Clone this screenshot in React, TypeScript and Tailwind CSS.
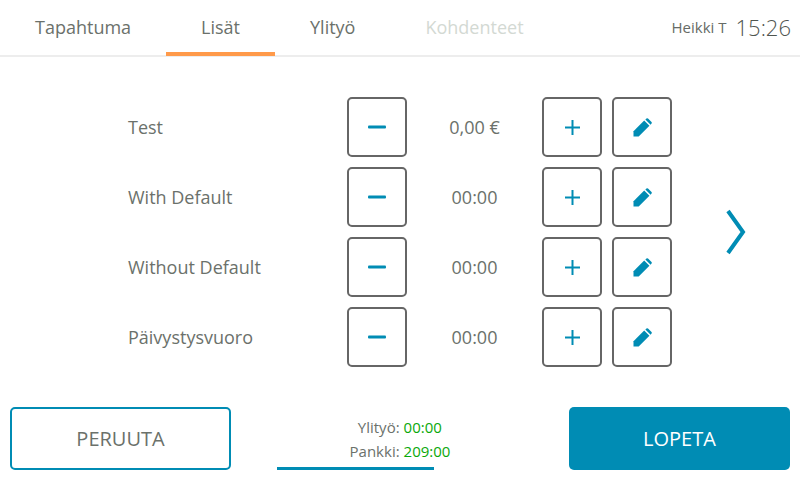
const rows = [
  { label: "Test", value: "0,00 €" },
  { label: "With Default", value: "00:00" },
  { label: "Without Default", value: "00:00" },
  { label: "Päivystysvuoro", value: "00:00" },
];

const tabs = [
  { label: "Tapahtuma", cls: "text-[#6b716b]" },
  { label: "Lisät", cls: "text-[#6b716b]" },
  { label: "Ylityö", cls: "text-[#6b716b]" },
  { label: "Kohdenteet", cls: "text-[#d3d9d3]" },
];

function SquareButton({ children }: { children: React.ReactNode }) {
  return (
    <button className="w-[60px] h-[60px] border-2 border-[#666666] rounded-[5px] bg-white flex items-center justify-center">
      {children}
    </button>
  );
}

function Minus() {
  return (
    <svg width="18" height="4" viewBox="0 0 18 4">
      <rect x="0" y="0.5" width="18" height="3" rx="1" fill="#008cb4" />
    </svg>
  );
}

function Plus() {
  return (
    <svg width="15" height="15" viewBox="0 0 15 15">
      <rect x="0" y="6.5" width="15" height="2" fill="#008cb4" />
      <rect x="6.5" y="0" width="2" height="15" fill="#008cb4" />
    </svg>
  );
}

function Pencil() {
  return (
    <svg width="19" height="19" viewBox="0 0 20 20">
      <path d="M0.5 14 L11.8 2.7 L17.3 8.2 L6 19.5 L0.5 19.5 Z" fill="#008cb4" />
      <path d="M13 1.5 L14.2 0.5 Q15 -0.2 15.8 0.5 L19.5 4.2 Q20.2 5 19.5 5.8 L18.5 7 Z" fill="#008cb4" />
    </svg>
  );
}

export default function App() {
  return (
    <div className="w-[800px] h-[480px] bg-white flex flex-col overflow-hidden font-['Open_Sans',sans-serif] text-[#6b716b]">
      <header className="h-[57px] shrink-0 flex border-b-2 border-[#ededed]">
        <nav className="flex h-[56px]">
          {tabs.map((t, i) => (
            <div
              key={t.label}
              className={`h-[56px] px-[35px] flex items-center text-[18px] border-b-4 ${
                i === 1 ? "border-[#ff9a4a]" : "border-transparent"
              } ${t.cls}`}
            >
              <span className="relative top-[1px]">{t.label}</span>
            </div>
          ))}
        </nav>
        <div className="ml-auto flex items-center gap-[9px] pr-[9px]">
          <span className="text-[15px] text-[#666b66]">Heikki T</span>
          <span className="text-[22px] font-light text-[#4f554f]">15:26</span>
        </div>
      </header>

      <main className="flex-1 flex">
        <div className="pt-[40px] pl-[128px] flex flex-col gap-[10px]">
          {rows.map((r) => (
            <div key={r.label} className="flex items-center h-[60px]">
              <div className="w-[219px] text-[18px]">{r.label}</div>
              <SquareButton>
                <Minus />
              </SquareButton>
              <div className="w-[135px] text-center text-[18px]">{r.value}</div>
              <SquareButton>
                <Plus />
              </SquareButton>
              <div className="w-[10px]" />
              <SquareButton>
                <Pencil />
              </SquareButton>
            </div>
          ))}
        </div>
        <div className="ml-[54px] pt-[152px]">
          <svg width="20" height="46" viewBox="0 0 20 46">
            <path d="M2 2 L17 23 L2 44" fill="none" stroke="#008cb4" strokeWidth="4" />
          </svg>
        </div>
      </main>

      <footer className="h-[73px] shrink-0 flex px-[10px] pb-[10px]">
        <button className="w-[221px] h-[63px] border-2 border-[#008cb4] rounded-[5px] text-[20px] text-[#6b716b] bg-white">
          PERUUTA
        </button>
        <div className="flex-1 flex justify-center relative">
          <div className="pt-[8px] text-[15px] leading-[24px] grid grid-cols-[auto_auto] gap-x-[4px] h-fit">
            <span className="text-right">Ylityö:</span>
            <span className="text-[#0aa80a]">00:00</span>
            <span className="text-right">Pankki:</span>
            <span className="text-[#0aa80a]">209:00</span>
          </div>
          <div className="absolute left-[46px] bottom-0 w-[157px] h-[3px] bg-[#008cb4]" />
        </div>
        <button className="w-[221px] h-[63px] rounded-[5px] bg-[#008cb4] text-[20px] text-white">LOPETA</button>
      </footer>
    </div>
  );
}
